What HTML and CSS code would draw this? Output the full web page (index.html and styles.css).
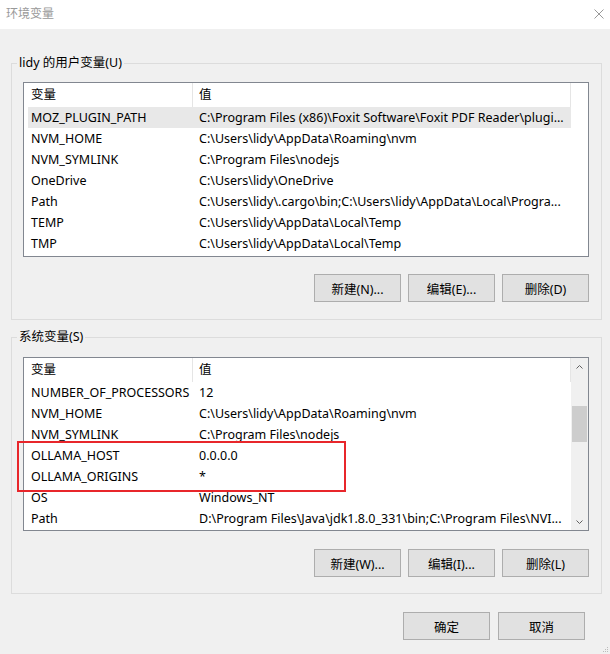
FILE: index.html
```html
<!DOCTYPE html>
<html lang="zh-CN">
<head>
    <meta charset="UTF-8">
    <title>环境变量</title>
    <link rel="stylesheet" href="styles.css">
</head>
<body>

    <div class="titlebar">
        <span class="title">环境变量</span>
        <svg class="close" width="10" height="10" viewBox="0 0 10 10">
            <path d="M0.5 0.5 L9.5 9.5 M9.5 0.5 L0.5 9.5" stroke="#999" stroke-width="1" fill="none"/>
        </svg>
    </div>

    <fieldset class="group group-user">
        <legend>lidy 的用户变量(U)</legend>
        <div class="list list-user">
            <div class="list-head">
                <span class="head-name">变量</span>
                <span class="head-value">值</span>
            </div>
            <div class="row selected"><span class="col-name">MOZ_PLUGIN_PATH</span><span class="col-value">C:\Program Files (x86)\Foxit Software\Foxit PDF Reader\plugi...</span></div>
            <div class="row"><span class="col-name">NVM_HOME</span><span class="col-value">C:\Users\lidy\AppData\Roaming\nvm</span></div>
            <div class="row"><span class="col-name">NVM_SYMLINK</span><span class="col-value">C:\Program Files\nodejs</span></div>
            <div class="row"><span class="col-name">OneDrive</span><span class="col-value">C:\Users\lidy\OneDrive</span></div>
            <div class="row"><span class="col-name">Path</span><span class="col-value">C:\Users\lidy\.cargo\bin;C:\Users\lidy\AppData\Local\Progra...</span></div>
            <div class="row"><span class="col-name">TEMP</span><span class="col-value">C:\Users\lidy\AppData\Local\Temp</span></div>
            <div class="row"><span class="col-name">TMP</span><span class="col-value">C:\Users\lidy\AppData\Local\Temp</span></div>
        </div>
        <div class="buttons">
            <button class="btn">新建(N)...</button>
            <button class="btn">编辑(E)...</button>
            <button class="btn">删除(D)</button>
        </div>
    </fieldset>

    <fieldset class="group group-system">
        <legend>系统变量(S)</legend>
        <div class="list list-system">
            <div class="list-body">
                <div class="list-head">
                    <span class="head-name">变量</span>
                    <span class="head-value">值</span>
                </div>
                <div class="row"><span class="col-name">NUMBER_OF_PROCESSORS</span><span class="col-value">12</span></div>
                <div class="row"><span class="col-name">NVM_HOME</span><span class="col-value">C:\Users\lidy\AppData\Roaming\nvm</span></div>
                <div class="row"><span class="col-name">NVM_SYMLINK</span><span class="col-value">C:\Program Files\nodejs</span></div>
                <div class="row"><span class="col-name">OLLAMA_HOST</span><span class="col-value">0.0.0.0</span></div>
                <div class="row"><span class="col-name">OLLAMA_ORIGINS</span><span class="col-value">*</span></div>
                <div class="row"><span class="col-name">OS</span><span class="col-value">Windows_NT</span></div>
                <div class="row"><span class="col-name">Path</span><span class="col-value">D:\Program Files\Java\jdk1.8.0_331\bin;C:\Program Files\NVI...</span></div>
            </div>
            <div class="scrollbar">
                <div class="arrow">
                    <svg width="7" height="4" viewBox="0 0 7 4"><path d="M0.5 3.5 L3.5 0.5 L6.5 3.5" stroke="#606060" fill="none"/></svg>
                </div>
                <div class="track"><div class="thumb"></div></div>
                <div class="arrow">
                    <svg width="7" height="4" viewBox="0 0 7 4"><path d="M0.5 0.5 L3.5 3.5 L6.5 0.5" stroke="#606060" fill="none"/></svg>
                </div>
            </div>
        </div>
        <div class="buttons buttons-system">
            <button class="btn">新建(W)...</button>
            <button class="btn">编辑(I)...</button>
            <button class="btn">删除(L)</button>
        </div>
    </fieldset>

    <div class="dialog-buttons">
        <button class="btn">确定</button>
        <button class="btn">取消</button>
    </div>

    <!-- marca roja sobre las dos variables de Ollama -->
    <div class="highlight-box"></div>

    <svg class="grip" width="6" height="6" viewBox="0 0 6 6">
        <rect x="4" y="0" width="1" height="1" fill="#bbb"/>
        <rect x="2" y="2" width="1" height="1" fill="#bbb"/>
        <rect x="4" y="2" width="1" height="1" fill="#bbb"/>
        <rect x="0" y="4" width="1" height="1" fill="#bbb"/>
        <rect x="2" y="4" width="1" height="1" fill="#bbb"/>
        <rect x="4" y="4" width="1" height="1" fill="#bbb"/>
    </svg>

</body>
</html>
```

FILE: styles.css
```css
* {
    box-sizing: border-box;
}
body {
    font-family: "Noto Sans", "Noto Sans CJK SC", sans-serif;
    font-size: 12px;
    color: #000;
    background-color: #f0f0f0;
    margin: 0;
    width: 610px;
    height: 654px;
    position: relative;
    overflow: hidden;
}
.titlebar {
    height: 29px;
    background-color: #fff;
    display: flex;
    align-items: center;
    justify-content: space-between;
    padding: 0 6px 2px 6px;
}
.title {
    color: #999;
    font-size: 12px;
    line-height: 16px;
}
.close {
    margin-top: 1px;
}
.group {
    margin: 26px 8px 0 11px;
    padding: 11px 12px 17px 11px;
    border: 1px solid #dcdcdc;
    min-width: 0;
}
.group legend {
    margin-left: -6px;
    padding: 0 2px;
    line-height: 16px;
    font-size: 12.5px;
}
.group-system {
    margin-top: 9px;
    padding-top: 12px;
    padding-bottom: 16px;
}
.list {
    background-color: #fff;
    border: 1px solid #828790;
    height: 175px;
    overflow: hidden;
}
.list-system {
    height: 174px;
    display: flex;
}
.list-body {
    flex: 1;
    min-width: 0;
}
.list-head {
    display: flex;
    height: 24px;
    line-height: 24px;
    font-size: 12.5px;
}
.head-name {
    width: 169px;
    padding-left: 7px;
    border-right: 1px solid #e5e5e5;
}
.head-value {
    width: 378px;
    padding-left: 6px;
    border-right: 1px solid #e5e5e5;
}
.list-system .head-value {
    flex: 1;
}
.row {
    display: flex;
    height: 21px;
    line-height: 22px;
    margin-left: 4px;
    width: 543px;
    white-space: nowrap;
    font-size: 12.5px;
}
.row.selected {
    background-color: #e8e8e8;
}
.col-name {
    width: 165px;
    padding-left: 3px;
    overflow: hidden;
}
.col-value {
    flex: 1;
    padding-left: 6px;
    overflow: hidden;
    text-overflow: ellipsis;
}
.scrollbar {
    width: 17px;
    background-color: #f0f0f0;
    display: flex;
    flex-direction: column;
}
.arrow {
    height: 17px;
    display: flex;
    align-items: center;
    justify-content: center;
}
.track {
    flex: 1;
    padding-top: 31px;
}
.thumb {
    height: 36px;
    margin: 0 1px;
    background-color: #cdcdcd;
}
.buttons {
    display: flex;
    justify-content: flex-end;
    gap: 7px;
    margin-top: 17px;
}
.buttons-system {
    margin-top: 18px;
}
.btn {
    width: 87px;
    height: 28px;
    background-color: #e1e1e1;
    border: 1px solid #adadad;
    font-family: inherit;
    font-size: 12.5px;
    color: #000;
    padding: 0;
}
.dialog-buttons {
    display: flex;
    justify-content: flex-end;
    gap: 8px;
    margin-top: 18px;
    padding-right: 25px;
}
.highlight-box {
    position: absolute;
    left: 17px;
    top: 441px;
    width: 329px;
    height: 51px;
    border: 2px solid #e8262b;
}
.grip {
    position: absolute;
    right: 1px;
    bottom: 1px;
}
```
